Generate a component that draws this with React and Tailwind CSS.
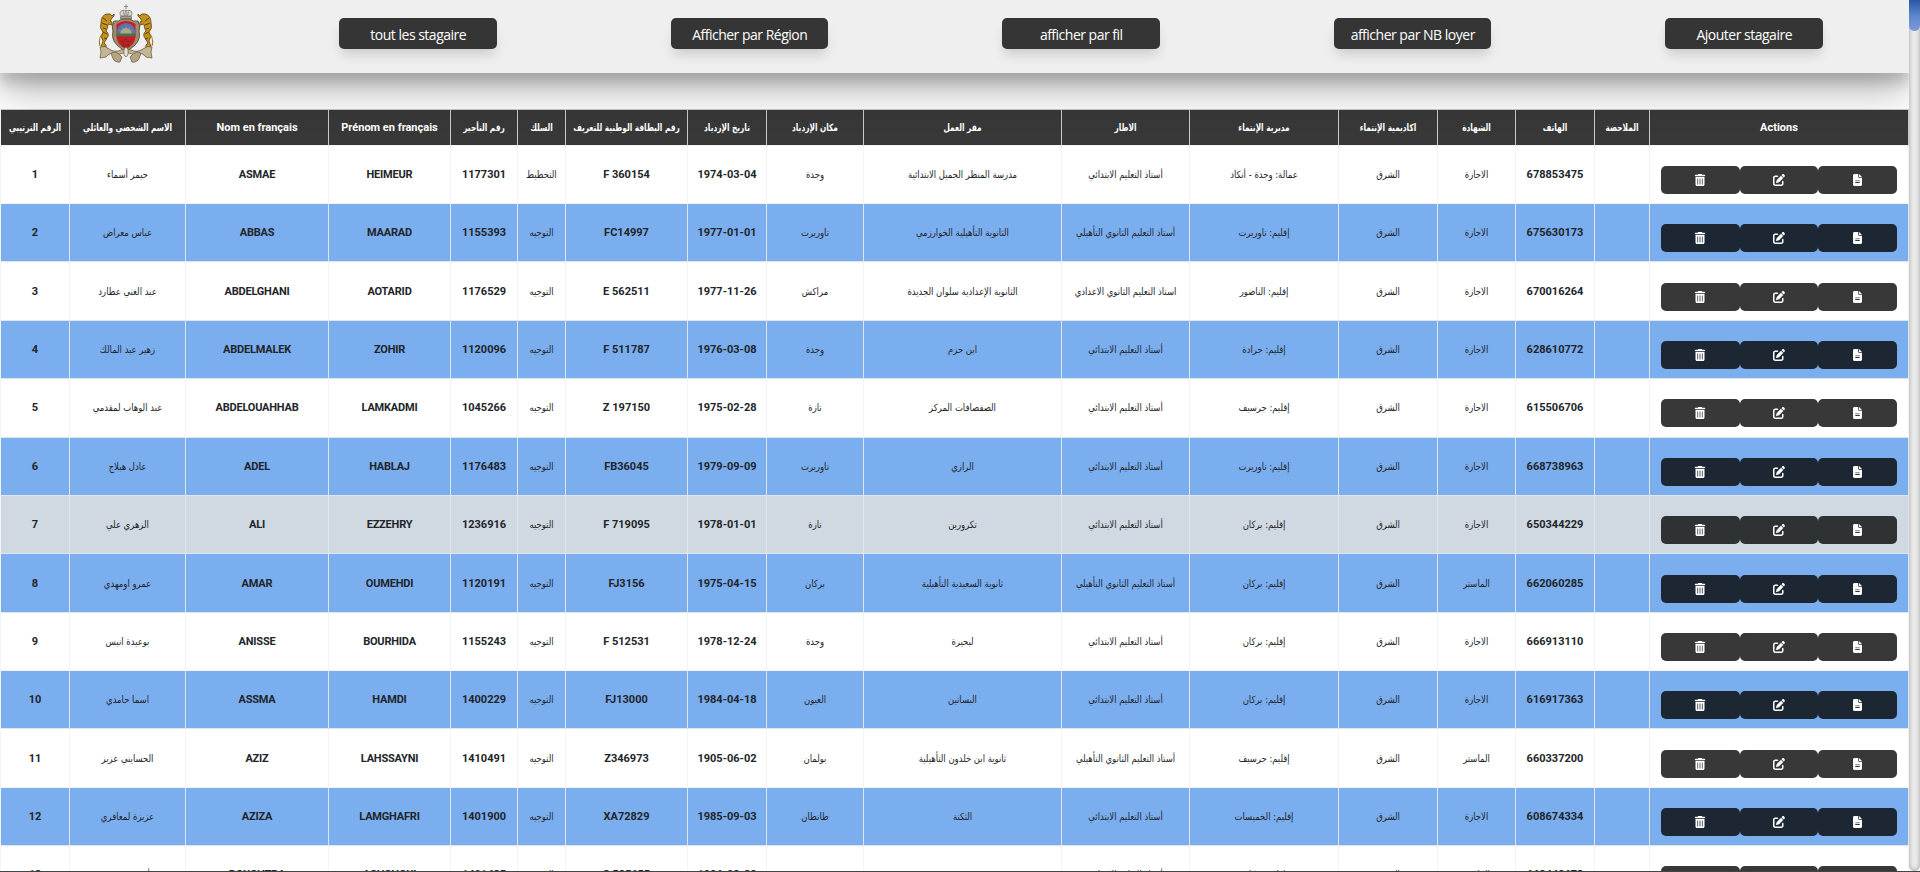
import React from "react";
import { FaTrashCan, FaPenToSquare } from "react-icons/fa6";

const NAV = ["tout les stagaire", "Afficher par Région", "afficher par fil", "afficher par NB loyer", "Ajouter stagaire"];

const COLUMNS = [
  ["الرقم الترتيبي", 69],
  ["الاسم الشخصي والعائلي", 116],
  ["Nom en français", 143],
  ["Prénom en français", 122],
  ["رقم التأجير", 67],
  ["السلك", 48],
  ["رقم البطاقة الوطنية للتعريف", 122],
  ["تاريخ الإزدياد", 79],
  ["مكان الإزدياد", 97],
  ["مقر العمل", 198],
  ["الاطار", 128],
  ["مديرية الإنتماء", 149],
  ["اكاديمية الإنتماء", 99],
  ["الشهادة", 78],
  ["الهاتف", 79],
  ["الملاحضة", 55],
  ["Actions", 259],
];

const PRIMAIRE = "أستاذ التعليم الابتدائي";
const LYCEE = "أستاذ التعليم الثانوي التأهيلي";
const COLLEGE = "استاذ التعليم الثانوي الاعدادي";
const LICENCE = "الاجازة";
const MASTER = "الماستر";
const ORIENT = "التوجيه";

const ROWS = [
  ["1", "حيمر أسماء", "ASMAE", "HEIMEUR", "1177301", "التخطيط", "F 360154", "1974-03-04", "وجدة", "مدرسة المنظر الجميل الابتدائية", PRIMAIRE, "عمالة: وجدة - أنكاد", "الشرق", LICENCE, "678853475", ""],
  ["2", "عباس معراض", "ABBAS", "MAARAD", "1155393", ORIENT, "FC14997", "1977-01-01", "تاوريرت", "الثانوية التأهيلية الخوارزمي", LYCEE, "إقليم: تاوريرت", "الشرق", LICENCE, "675630173", ""],
  ["3", "عبد الغني عطارد", "ABDELGHANI", "AOTARID", "1176529", ORIENT, "E 562511", "1977-11-26", "مراكش", "الثانوية الإعدادية سلوان الجديدة", COLLEGE, "إقليم: الناضور", "الشرق", LICENCE, "670016264", ""],
  ["4", "زهير عبد المالك", "ABDELMALEK", "ZOHIR", "1120096", ORIENT, "F 511787", "1976-03-08", "وجدة", "ابن حزم", PRIMAIRE, "إقليم: جرادة", "الشرق", LICENCE, "628610772", ""],
  ["5", "عبد الوهاب لمقدمي", "ABDELOUAHHAB", "LAMKADMI", "1045266", ORIENT, "Z 197150", "1975-02-28", "تازة", "الصفصافات المركز", PRIMAIRE, "إقليم: جرسيف", "الشرق", LICENCE, "615506706", ""],
  ["6", "عادل هبلاج", "ADEL", "HABLAJ", "1176483", ORIENT, "FB36045", "1979-09-09", "تاوريرت", "الرازي", PRIMAIRE, "إقليم: تاوريرت", "الشرق", LICENCE, "668738963", ""],
  ["7", "الزهري علي", "ALI", "EZZEHRY", "1236916", ORIENT, "F 719095", "1978-01-01", "تازة", "تكرورين", PRIMAIRE, "إقليم: بركان", "الشرق", LICENCE, "650344229", ""],
  ["8", "عمرو اومهدي", "AMAR", "OUMEHDI", "1120191", ORIENT, "FJ3156", "1975-04-15", "بركان", "ثانوية السعيدية التأهيلية", LYCEE, "إقليم: بركان", "الشرق", MASTER, "662060285", ""],
  ["9", "بوعيدة انيس", "ANISSE", "BOURHIDA", "1155243", ORIENT, "F 512531", "1978-12-24", "وجدة", "لبحيرة", PRIMAIRE, "إقليم: بركان", "الشرق", LICENCE, "666913110", ""],
  ["10", "اسما حامدي", "ASSMA", "HAMDI", "1400229", ORIENT, "FJ13000", "1984-04-18", "العيون", "البساتين", PRIMAIRE, "إقليم: بركان", "الشرق", LICENCE, "616917363", ""],
  ["11", "الحسايني عزيز", "AZIZ", "LAHSSAYNI", "1410491", ORIENT, "Z346973", "1905-06-02", "بولمان", "ثانوية ابن خلدون التأهيلية", LYCEE, "إقليم: جرسيف", "الشرق", MASTER, "660337200", ""],
  ["12", "عزيزة لمعافري", "AZIZA", "LAMGHAFRI", "1401900", ORIENT, "XA72829", "1985-09-03", "طانطان", "الثكنة", PRIMAIRE, "إقليم: الخميسات", "الشرق", LICENCE, "608674334", ""],
  ["13", "أحمد بوشنفة", "BOUCHTRA", "ACHCHOUI", "1401425", ORIENT, "S 525655", "1986-08-28", "وجدة", "مدرسة", PRIMAIRE, "إقليم: بركان", "الشرق", MASTER, "662442673", ""],
];

const TALL = new Set(["3", "5", "8", "11"]);

function Emblem() {
  return (
    <svg width="56" height="60" viewBox="0 0 56 60" fill="none">
      <g stroke="#77736b" strokeWidth="0.8">
        <path d="M28 0.500v5M26 2.500h4" />
        <path d="M23 12c-3-4 1-7 5-5c4-2 8 1 5 5z" fill="#d9d6cf" />
        <path d="M28 6v6M25.500 7.500l1 4.500M30.500 7.500l-1 4.500" />
        <path d="M22.500 12.500h11v2.500h-11z" fill="#aaa18d" />
      </g>
      <path d="M16 17q5 1 8-2h8q3 3 8 2q3 5 1 10q2 8-4 14q-5 5-9 6q-4-1-9-6q-6-6-4-14q-2-5 1-10z" fill="#9c8d6c" stroke="#574a38" strokeWidth="0.9" />
      <path d="M18.500 20q9.500-6 19 0v13q-1 9-9.500 11.500q-8.500-2.500-9.500-11.500z" fill="#cf1924" />
      <path d="M19 30q-1-10 9-11q10 1 9 11z" fill="#5873ad" />
      <path d="M22 30q1-6 6-6t6 6z" fill="#a5a98f" />
      <path d="M28 22v8M24 23l4 7l4-7M21 26l7 4l7-4" stroke="#b5ad78" strokeWidth="0.5" />
      <path d="M18.500 29.500h19v3h-19z" fill="#4d7045" />
      <path d="M28 34l1.300 3.400h3.500l-2.800 2.100l1 3.400l-3-2.100l-3 2.100l1-3.400l-2.800-2.100h3.500z" stroke="#5b3a24" strokeWidth="0.9" />
      <g fill="#c1921d" stroke="#6b4c16" strokeWidth="0.9">
        <path d="M9 10q4-1 5 2l2-2q1 2-2 4l-2 3q3 0 2 4l-4-1q0 4-2 7q4 3 1 7l-3 5q3 2 2 4H3l2-6q-3-4 0-9q-4-4-2-9Q3 11 9 10z" />
        <path d="M47 10q-4-1-5 2l-2-2q-1 2 2 4l2 3q-3 0-2 4l4-1q0 4 2 7q-4 3-1 7l3 5q-3 2-2 4h5l-2-6q3-4 0-9q4-4 2-9Q53 11 47 10z" />
      </g>
      <path d="M5 14l4 3M4 19l5 2M51 14l-4 3M52 19l-5 2M5 28l4 2M51 28l-4 2M5 24l3 1M51 24l-3 1M6 34l3 1M50 34l-3 1" stroke="#5d4016" strokeWidth="1" />
      <path d="M4 30Q0 35 2 42M52 30q4 5 2 12" stroke="#a87c1d" strokeWidth="1.200" />
      <g stroke="#6f6046" strokeWidth="0.8">
        <path d="M2 43q5-2 9 2q6 4 12 1q5-2 10 0q6 3 12-1q4-4 9-2l-1 5l1 6l-6-1q-4-5-8-3q-6 1-9-1q-3-2-6 0q-3 2-9 1q-4-2-8 3l-6 1l1-6z" fill="#c3b694" />
        <path d="M14 52q-2-4 3-4q4 1 7 5l-2 5q-6 1-8-6zM42 52q2-4-3-4q-4 1-7 5l2 5q6 1 8-6z" fill="#b3a581" />
        <ellipse cx="28" cy="48" rx="2.200" ry="4.500" fill="#e4dfd2" />
      </g>
    </svg>
  );
}

function FileIcon() {
  return (
    <svg width="9" height="12" viewBox="0 0 384 512" fill="currentColor">
      <path d="M64 0C29 0 0 29 0 64v384c0 35 29 64 64 64h256c35 0 64-29 64-64V160H256c-18 0-32-14-32-32V0H64zM256 0v128h128L256 0z" />
      <path d="M96 262h192v50H96z" fill="#8d9298" />
      <path d="M96 342h192v42H96z" fill="#34393f" />
    </svg>
  );
}

const ICONS = [FaTrashCan, FaPenToSquare, FileIcon];

function isArabic(text) {
  return /[\u0600-\u06ff]/.test(text);
}

function Row({ row, index }) {
  const blue = index % 2 === 1;
  const hovered = row[0] === "7";
  const bg = blue ? "bg-[#7aaeef]" : hovered ? "bg-[#d0d8e1]" : "bg-white";
  const line = blue || hovered ? "border-[#dfe5ed]" : "border-[#f3f4f5]";
  const button = blue ? "bg-[#1c2733]" : hovered ? "bg-[#2f3232]" : "bg-[#383838]";
  const bottom = hovered || blue || row[0] === "3" || row[0] === "5" ? "border-b-[#dfe5ed]" : "border-b-[#f3f4f5]";
  const raised = row[0] === "5";
  return (
    <tr className={`${bg} ${TALL.has(row[0]) ? "h-[59px]" : "h-[58px]"}`}>
      {row.map((text, i) => (
        <td key={i} className={`border-r border-b p-0 text-center align-bottom whitespace-nowrap leading-[14px] ${raised ? "pb-[22px]" : "pb-[21px]"} ${line} ${bottom}`}>
          {isArabic(text) ? (
            <bdi dir="rtl" className="block scale-x-[0.94] font-['DejaVu_Sans_Condensed','DejaVu_Sans',sans-serif] text-[10px] leading-[14px]">{text}</bdi>
          ) : (
            <span className={`block font-[Roboto,sans-serif] text-[11px] font-bold leading-[14px] ${i === 2 || i === 3 ? "tracking-[-0.2px]" : ""}`}>{text}</span>
          )}
        </td>
      ))}
      <td className={`border-r border-b p-0 px-[11px] align-bottom ${raised ? "pb-[10px]" : "pb-[9px]"} ${line} ${bottom}`}>
        <div className="flex text-[12px] text-white">
          {ICONS.map((Icon, i) => (
            <button key={i} className={`flex h-7 flex-1 items-center justify-center rounded-[5px] ${button}`}>
              <Icon />
            </button>
          ))}
        </div>
      </td>
    </tr>
  );
}

export default function App() {
  return (
    <div className="flex h-[872px] w-[1920px] overflow-hidden border-b border-[#444] bg-white text-[#212529]">
      <div className="h-full w-[1909px] overflow-hidden">
        <header className="relative flex h-[73px] items-start bg-[#efefef] shadow-[0_19px_38px_rgba(0,0,0,0.28),0_10px_12px_rgba(0,0,0,0.15)]">
          <div className="w-[339px] pt-[4px] pl-[98px]">
            <Emblem />
          </div>
          <nav className="flex gap-[174px] pt-[18px]">
            {NAV.map((label) => (
              <button key={label} className="h-[31px] w-[157.5px] shrink-0 rounded-[5px] bg-[#353535] pt-px pl-px font-['Open_Sans',sans-serif] text-[14px] tracking-[-0.5px] text-white shadow-[0_8px_12px_-2px_rgba(0,0,0,0.14)]">
                {label}
              </button>
            ))}
          </nav>
        </header>
        <table className="mt-[36px] w-[1909px] table-fixed border-separate border-spacing-0 border-l border-[#f3f4f5]">
          <colgroup>
            {COLUMNS.map(([name, width]) => (
              <col key={name} style={{ width }} />
            ))}
          </colgroup>
          <thead>
            <tr className="h-[37px] bg-[#383838] text-white">
              {COLUMNS.map(([name]) => (
                <th key={name} className="border-t border-r border-b border-[#c9c9c9] border-b-[#f3f4f5] p-0 align-middle whitespace-nowrap">
                  {isArabic(name) ? (
                    <bdi dir="rtl" className="flex scale-x-[0.82] justify-center font-['DejaVu_Sans_Condensed','DejaVu_Sans',sans-serif] text-[10px] font-bold leading-[14px]">{name}</bdi>
                  ) : (
                    <span className="block font-[Roboto,sans-serif] text-[11px] font-bold leading-[14px]">{name}</span>
                  )}
                </th>
              ))}
            </tr>
          </thead>
          <tbody>
            {ROWS.map((row, i) => (
              <Row key={row[0]} row={row} index={i} />
            ))}
          </tbody>
        </table>
      </div>
      <div className="relative h-full w-[11px] bg-white">
        <div className="h-full rounded-[10px] bg-[#ececec] shadow-[inset_0_0_5px_rgba(128,128,128,0.7)]">
          <div className="h-[31px] rounded-b-[6px] bg-linear-to-b from-[#2c54a4] via-[#5c87cd] to-[#7d9adb]" />
        </div>
      </div>
    </div>
  );
}
